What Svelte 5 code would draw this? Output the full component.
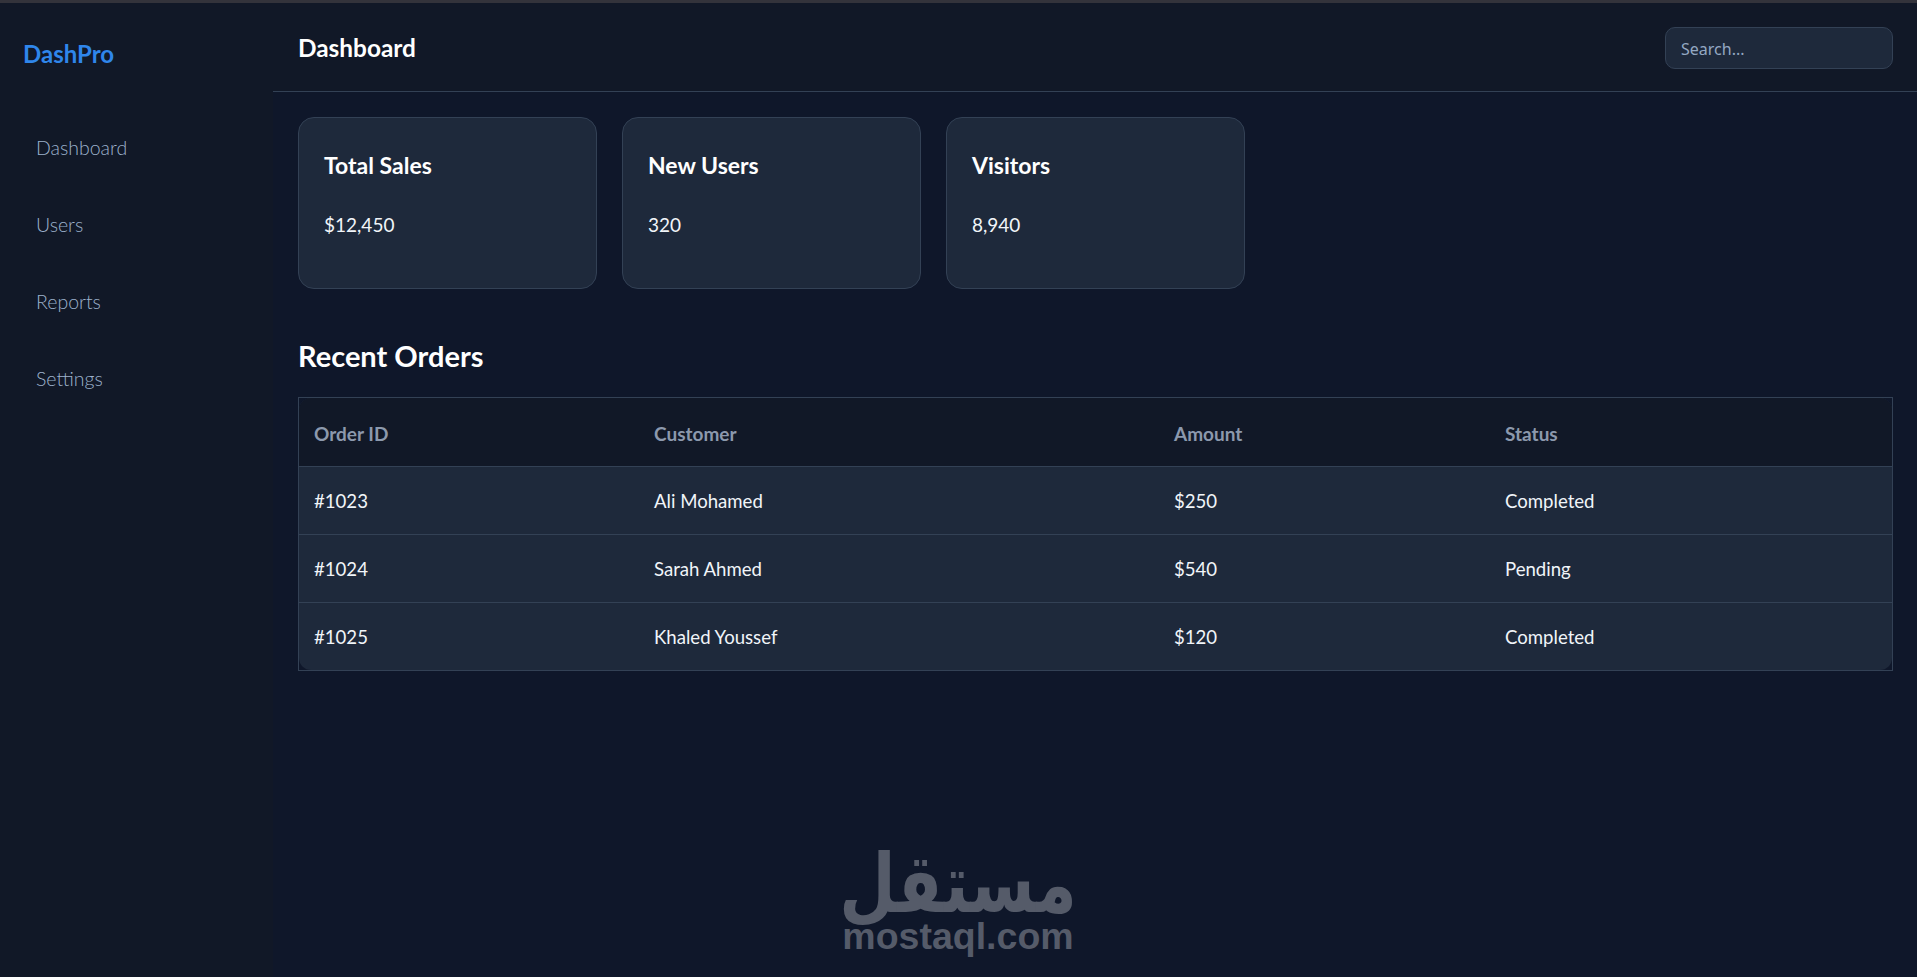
<script>
  const navItems = ['Dashboard', 'Users', 'Reports', 'Settings'];
  const stats = [
    { title: 'Total Sales', value: '$12,450' },
    { title: 'New Users', value: '320' },
    { title: 'Visitors', value: '8,940' }
  ];
  const orders = [
    { id: '#1023', customer: 'Ali Mohamed', amount: '$250', status: 'Completed' },
    { id: '#1024', customer: 'Sarah Ahmed', amount: '$540', status: 'Pending' },
    { id: '#1025', customer: 'Khaled Youssef', amount: '$120', status: 'Completed' }
  ];
</script>

<div class="strip"></div>
<div class="layout">
  <aside class="sidebar">
    <div class="logo">DashPro</div>
    <nav>
      {#each navItems as item}
        <a href="#top">{item}</a>
      {/each}
    </nav>
  </aside>

  <div class="main">
    <header class="topbar">
      <h1>Dashboard</h1>
      <input type="text" placeholder="Search..." />
    </header>

    <section class="content">
      <div class="cards">
        {#each stats as stat}
          <div class="card">
            <h3>{stat.title}</h3>
            <p>{stat.value}</p>
          </div>
        {/each}
      </div>

      <h2>Recent Orders</h2>

      <div class="table-frame">
        <table>
          <colgroup>
            <col class="c1" />
            <col class="c2" />
            <col class="c3" />
            <col />
          </colgroup>
          <thead>
            <tr>
              <th>Order ID</th>
              <th>Customer</th>
              <th>Amount</th>
              <th>Status</th>
            </tr>
          </thead>
          <tbody>
            {#each orders as order}
              <tr>
                <td>{order.id}</td>
                <td>{order.customer}</td>
                <td>{order.amount}</td>
                <td>{order.status}</td>
              </tr>
            {/each}
          </tbody>
        </table>
      </div>
    </section>
  </div>
</div>

<div class="watermark">
  <div class="wm-ar" dir="rtl">مستقل</div>
  <div class="wm-en">mostaql.com</div>
</div>

<style>
  :global(body) {
    margin: 0;
    background: #0f172a;
    font-family: Lato, "Noto Sans", sans-serif;
    color: #fff;
    overflow: hidden;
  }

  .strip {
    height: 3px;
    background: #33333b;
  }

  .layout {
    display: flex;
    height: 974px;
  }

  .sidebar {
    width: 273px;
    flex-shrink: 0;
    background: #111827;
    box-sizing: border-box;
    padding: 33px 23px;
  }

  .logo {
    font-size: 24px;
    font-weight: 700;
    line-height: 36px;
    color: #2f86eb;
    margin-bottom: 37px;
  }

  nav {
    display: flex;
    flex-direction: column;
    padding: 0 13px;
  }

  nav a {
    color: #9db2cc;
    text-decoration: none;
    font-size: 19.5px;
    font-weight: 300;
    line-height: 77px;
    height: 77px;
  }

  .main {
    flex: 1;
    min-width: 0;
  }

  .topbar {
    height: 89px;
    box-sizing: border-box;
    padding: 0 24px 0 25px;
    background: #111827;
    border-bottom: 1px solid #334155;
    display: flex;
    justify-content: space-between;
    align-items: flex-start;
  }

  h1 {
    margin: 0;
    padding-top: 26px;
    font-size: 24.4px;
    line-height: 38px;
    font-weight: 700;
  }

  input {
    margin-top: 24px;
    width: 228px;
    height: 42px;
    box-sizing: border-box;
    background: #1e293b;
    border: 1px solid #334155;
    border-radius: 10px;
    padding: 2px 15px 0;
    color: #fff;
    font-family: "Noto Sans", sans-serif;
    font-size: 16px;
    outline: none;
  }

  input::placeholder {
    color: #94a8c2;
    opacity: 1;
  }

  .content {
    padding: 25px 24px 0 25px;
  }

  .cards {
    display: flex;
    gap: 25px;
  }

  .card {
    width: 299px;
    height: 172px;
    box-sizing: border-box;
    background: #1e293b;
    border: 1px solid #334155;
    border-radius: 16px;
    padding: 30px 25px;
  }

  h3 {
    margin: 0 0 27px;
    font-size: 23px;
    line-height: 34px;
    font-weight: 700;
  }

  .card p {
    margin: 0;
    font-size: 19px;
    line-height: 32px;
    font-weight: 400;
    color: #f1f5f9;
  }

  h2 {
    margin: 46px 0 20px;
    font-size: 29px;
    line-height: 42px;
    font-weight: 700;
  }

  .table-frame {
    border: 1px solid #334155;
    width: 100%;
    box-sizing: border-box;
  }

  table {
    width: 100%;
    border-collapse: separate;
    border-spacing: 0;
    table-layout: fixed;
    background: #1e293b;
    border-radius: 12px;
    overflow: hidden;
  }

  .c1 { width: 340px; }
  .c2 { width: 520px; }
  .c3 { width: 331px; }

  th, td {
    text-align: left;
    padding: 0 15px;
    height: 68px;
    box-sizing: border-box;
  }

  th {
    background: #111827;
    color: #8c99ad;
    font-weight: 700;
    font-size: 19px;
    padding-top: 2px;
  }

  td {
    font-size: 18.6px;
    font-weight: 400;
    color: #f1f5f9;
    border-top: 1px solid #334155;
  }

  .watermark {
    position: absolute;
    left: 838px;
    top: 857px;
    width: 240px;
    display: flex;
    flex-direction: column;
    align-items: center;
    color: #555b69;
  }

  .wm-ar {
    font-family: "DejaVu Sans", sans-serif;
    font-weight: 700;
    font-size: 65px;
    line-height: 54px;
    transform: scaleY(1.25);
  }

  .wm-en {
    margin-top: 7px;
    font-family: "Liberation Sans", sans-serif;
    font-weight: 700;
    font-size: 37.5px;
    line-height: 36px;
  }
</style>
